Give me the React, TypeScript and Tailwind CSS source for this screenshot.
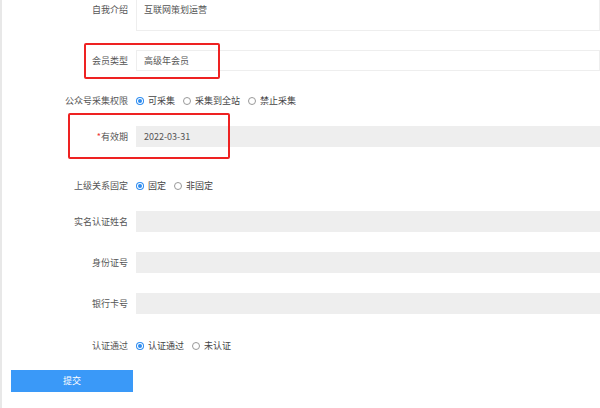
import React from 'react';

const font = { fontFamily: '"Noto Sans CJK SC", "Liberation Sans", sans-serif' };

const Label = ({ children }: { children: React.ReactNode }) => (
  <div className="w-[127px] shrink-0 pr-[1px] text-right text-[9px] text-[#555]">{children}</div>
);

const Radio = ({ on, label }: { on?: boolean; label: string }) => (
  <span className="flex items-center gap-[4px] mr-[8px]">
    {on ? (
      <span className="w-[8px] h-[8px] rounded-full bg-[#2d8cf0] flex items-center justify-center">
        <span className="w-[4px] h-[4px] rounded-full bg-[#2d8cf0] ring-[1px] ring-white" />
      </span>
    ) : (
      <span className="w-[8px] h-[8px] rounded-full border border-[#999] bg-white" />
    )}
    <span className="text-[9px] text-[#444]">{label}</span>
  </span>
);

const GreyInput = ({ value }: { value?: string }) => (
  <div className="ml-[7px] flex-1 h-[21px] bg-[#eeeeee] flex items-center pl-[8px] text-[9px] text-[#555]">{value}</div>
);

export default function App() {
  return (
    <div className="relative w-[600px] h-[408px] bg-white overflow-hidden border-l-[2px] border-[#e8e8e8]" style={font}>
      <div className="flex items-start h-[31px] -mt-[1px]">
        <Label><div className="pt-[4px]">自我介绍</div></Label>
        <div className="ml-[7px] flex-1 h-[32px] border border-[#eee] pl-[7px] pt-[3px] text-[9px] text-[#555]">互联网策划运营</div>
      </div>
      <div className="flex items-center mt-[20px] h-[21px]">
        <Label>会员类型</Label>
        <div className="ml-[7px] flex-1 h-[21px] border border-[#eee] flex items-center pl-[7px] text-[9px] text-[#555]">高级年会员</div>
      </div>
      <div className="flex items-center mt-[19px] h-[21px]">
        <Label>公众号采集权限</Label>
        <div className="ml-[7px] flex items-center"><Radio on label="可采集" /><Radio label="采集到全站" /><Radio label="禁止采集" /></div>
      </div>
      <div className="flex items-center mt-[15px] h-[21px]">
        <Label><span className="text-[#e33]">*</span>有效期</Label>
        <GreyInput value="2022-03-31" />
      </div>
      <div className="flex items-center mt-[28px] h-[21px]">
        <Label>上级关系固定</Label>
        <div className="ml-[7px] flex items-center"><Radio on label="固定" /><Radio label="非固定" /></div>
      </div>
      <div className="flex items-center mt-[15px] h-[21px]">
        <Label>实名认证姓名</Label><GreyInput />
      </div>
      <div className="flex items-center mt-[20px] h-[21px]">
        <Label>身份证号</Label><GreyInput />
      </div>
      <div className="flex items-center mt-[20px] h-[21px]">
        <Label>银行卡号</Label><GreyInput />
      </div>
      <div className="flex items-center mt-[21px] h-[21px]">
        <Label>认证通过</Label>
        <div className="ml-[7px] flex items-center"><Radio on label="认证通过" /><Radio label="未认证" /></div>
      </div>
      <div className="mt-[14px] ml-[9px] w-[122px] h-[22px] bg-[#3a99f8] flex items-center justify-center text-[9px] text-white">提交</div>

      <div className="absolute left-[82px] top-[43px] w-[136px] h-[36px] border-[2px] border-[#ee2222] rounded-[2px]" />
      <div className="absolute left-[66px] top-[113px] w-[162px] h-[46px] border-[2px] border-[#ee2222] rounded-[2px]" />
    </div>
  );
}
